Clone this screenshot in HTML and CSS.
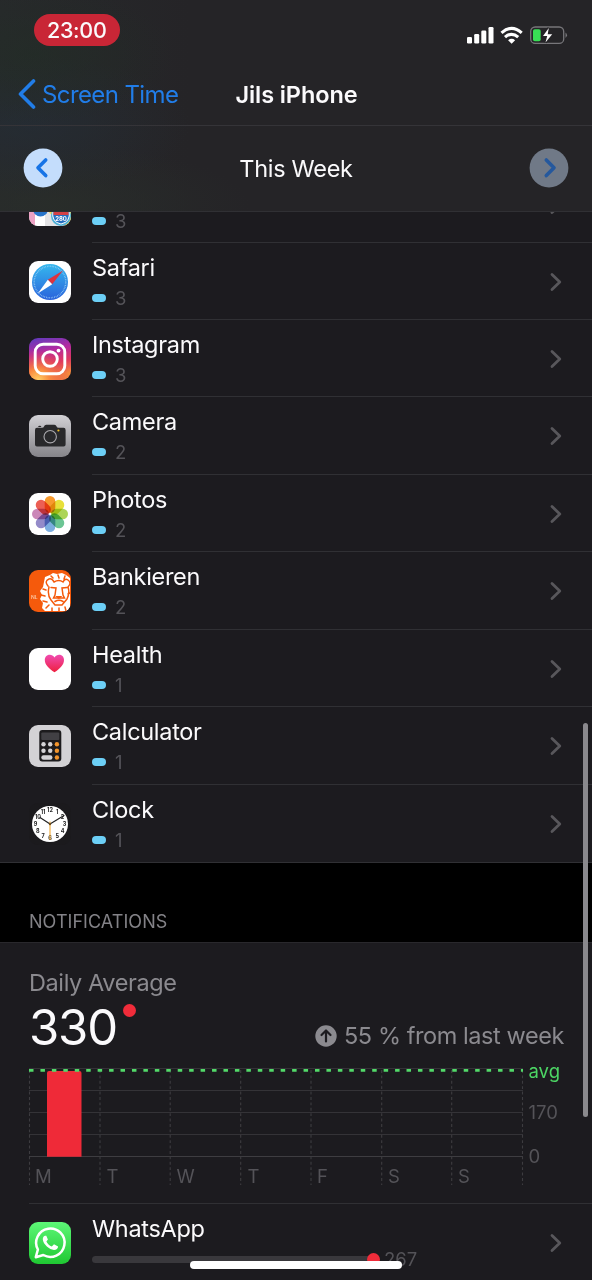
FILE: index.html
```html
<!DOCTYPE html>
<html lang="en">
<head>
<meta charset="utf-8">
<title>Screen Time</title>
<link rel="stylesheet" href="styles.css">
</head>
<body>
<svg class="defs" aria-hidden="true">
  <defs>
    <linearGradient id="safari" x2="0" y2="1"><stop stop-color="#35b8ee"/><stop offset="1" stop-color="#2a62dc"/></linearGradient>
    <linearGradient id="insta" x2="0.25" y2="1"><stop stop-color="#5a3cc0"/><stop offset=".4" stop-color="#b52aa0"/><stop offset=".7" stop-color="#e0385f"/><stop offset="1" stop-color="#f58a3c"/></linearGradient>
    <radialGradient id="instaGlow" cx=".22" cy="1" r=".75"><stop stop-color="#ffd063"/><stop offset=".35" stop-color="#f98c40"/><stop offset="1" stop-color="#e0385f" stop-opacity="0"/></radialGradient>
    <linearGradient id="camera" x2="0" y2="1"><stop stop-color="#d2d1d5"/><stop offset="1" stop-color="#858489"/></linearGradient>
    <linearGradient id="heart" x2="0" y2="1"><stop stop-color="#f04bb0"/><stop offset="1" stop-color="#ee1f3e"/></linearGradient>
    <linearGradient id="wa" x2="0" y2="1"><stop stop-color="#5df777"/><stop offset="1" stop-color="#1fc832"/></linearGradient>
    <clipPath id="tile"><rect width="42" height="42" rx="9"/></clipPath>
    <symbol id="chevron" viewBox="0 0 12 20"><path d="M2 2.500 9.800 10 2 17.500" fill="none" stroke="currentColor" stroke-width="2.800" stroke-linecap="round" stroke-linejoin="round"/></symbol>
  </defs>
</svg>
<div class="phone">
  <header class="header">
    <div class="status">
      <span class="time">23:00</span>
      <svg class="status-icons" width="102" height="20" viewBox="0 0 102 20">
        <g fill="#fff">
          <rect x="1" y="12" width="5" height="6.500" rx="1.300"/><rect x="8.200" y="9" width="5" height="9.500" rx="1.300"/><rect x="15.300" y="5.500" width="5" height="13" rx="1.300"/><rect x="22.500" y="2" width="5" height="16.500" rx="1.300"/>
          <path d="M45.600 18.800 42.100 15.200q3.500-2.900 7 0z"/>
        </g>
        <g fill="none" stroke="#fff" stroke-width="3.100">
          <path d="M35.500 7.800q10.100-9 20.200 0M39 12.200q6.600-5.800 13.200 0"/>
        </g>
        <rect x="64.700" y="2" width="33" height="16.400" rx="4.500" fill="none" stroke="#77767a" stroke-width="1.300"/>
        <path d="M99.500 7.500q3 2.700 0 5.400z" fill="#77767a"/>
        <rect x="67" y="4.300" width="7.700" height="12" rx="1.800" fill="#38df55"/>
        <path d="M82.800 3 77 11h4.200l-1.700 6.500 6.700-8.300h-4.500z" fill="#fff" stroke="#252427" stroke-width="2.600" paint-order="stroke"/>
      </svg>
    </div>
    <div class="nav">
      <span class="back"><svg width="19" height="32" viewBox="0 0 19 32"><path d="M16.500 3 3.500 16l13 13" fill="none" stroke="#217de8" stroke-width="3.600" stroke-linecap="round" stroke-linejoin="round"/></svg><span class="back-label">Screen Time</span></span>
      <span class="nav-title">Jils iPhone</span>
      <span></span>
    </div>
    <div class="week">
      <svg width="40" height="40" viewBox="0 0 40 40"><circle cx="20" cy="20" r="19.400" fill="#c4ddfc"/><path d="M22.700 12 15 19.800l7.700 7.800" fill="none" stroke="#1673e6" stroke-width="3.600" stroke-linecap="round" stroke-linejoin="round"/></svg>
      <span class="week-label">This Week</span>
      <svg width="40" height="40" viewBox="0 0 40 40"><circle cx="20" cy="20" r="19.400" fill="#707987"/><path d="M17.300 12 25 19.800l-7.700 7.800" fill="none" stroke="#25589d" stroke-width="3.600" stroke-linecap="round" stroke-linejoin="round"/></svg>
    </div>
  </header>

  <main>
    <section class="clipped">
      <div class="row">
        <svg class="app" viewBox="0 0 42 42"><g clip-path="url(#tile)"><path fill="#e4e3e5" d="M0 0h42v42H0z"/><path fill="#eca2c4" d="M0 0h6v42H0z"/><path fill="#fff" d="M6 26h10v16H6z"/><path fill="#f5d94f" d="M42 20v22h-5l-8-4-12-13z"/><circle cx="11.500" cy="25" r="7.500" fill="#2874c9"/><circle cx="32" cy="32" r="10" fill="#4eb1d6"/><path d="M24 27h16q2 11-8 13-10-2-8-13z" fill="#246fc0" stroke="#fff" stroke-width="1"/><path fill="#d44045" d="M24.500 27.500h15v3.500h-15z"/></g><text x="32" y="37" class="road">280</text></svg>
        <div class="info"><div class="name"></div><div class="usage"><i class="pill"></i>3</div></div><svg class="chev"><use href="#chevron"/></svg>
      </div>
    </section>

    <section class="list">
      <div class="row">
        <svg class="app" viewBox="0 0 42 42"><rect width="42" height="42" rx="9" fill="#fff"/><circle cx="21" cy="21" r="18" fill="url(#safari)"/><circle cx="21" cy="21" r="15.800" fill="none" stroke="#9fd3f7" stroke-width="1.500" stroke-dasharray=".6 1.050"/><path d="M34 9.500 18.800 18.800l4.400 4.400z" fill="#dc323f"/><path d="m18.800 18.800 4.400 4.400L8.800 32.500z" fill="#fff"/></svg>
        <div class="info"><div class="name">Safari</div><div class="usage"><i class="pill"></i>3</div></div><svg class="chev"><use href="#chevron"/></svg>
      </div>
      <div class="row">
        <svg class="app" viewBox="0 0 42 42"><rect width="42" height="42" rx="9" fill="url(#insta)"/><rect width="42" height="42" rx="9" fill="url(#instaGlow)"/><g fill="none" stroke="#fff" stroke-width="2.900"><rect x="6.200" y="6.200" width="29.600" height="29.600" rx="8"/><circle cx="21" cy="21" r="7.300"/></g><circle cx="29.500" cy="12.600" r="1.900" fill="#fff"/></svg>
        <div class="info"><div class="name">Instagram</div><div class="usage"><i class="pill"></i>3</div></div><svg class="chev"><use href="#chevron"/></svg>
      </div>
      <div class="row tall">
        <svg class="app" viewBox="0 0 42 42"><rect width="42" height="42" rx="9" fill="url(#camera)"/><path d="M6 15q0-2.200 2-2.200h5q1.600 0 2-1.400.5-1.600 2.300-1.600h8q1.800 0 2.300 1.600.4 1.400 2 1.400h5q2 0 2 2.200v14.500q0 2-2 2H8q-2 0-2-2z" fill="#29292b"/><path d="M9 12q.6-1.500 2.200-1.200 1 .2 1.200 1.200z" fill="#29292b"/><circle cx="21.200" cy="21.700" r="6.200" fill="none" stroke="#aaa9ad" stroke-width="1.100"/><circle cx="29.400" cy="15.500" r="1.100" fill="#f4bf21"/></svg>
        <div class="info"><div class="name">Camera</div><div class="usage"><i class="pill"></i>2</div></div><svg class="chev"><use href="#chevron"/></svg>
      </div>
      <div class="row">
        <svg class="app" viewBox="0 0 42 42"><rect width="42" height="42" rx="9" fill="#fff"/><g class="petals"><rect x="15.700" y="3" width="10.600" height="17" rx="5.300" fill="#f79a2e"/><rect x="15.700" y="3" width="10.600" height="17" rx="5.300" fill="#e8e03a" transform="rotate(45 21 21)"/><rect x="15.700" y="3" width="10.600" height="17" rx="5.300" fill="#add558" transform="rotate(90 21 21)"/><rect x="15.700" y="3" width="10.600" height="17" rx="5.300" fill="#6cc594" transform="rotate(135 21 21)"/><rect x="15.700" y="3" width="10.600" height="17" rx="5.300" fill="#7cade0" transform="rotate(180 21 21)"/><rect x="15.700" y="3" width="10.600" height="17" rx="5.300" fill="#948bc9" transform="rotate(225 21 21)"/><rect x="15.700" y="3" width="10.600" height="17" rx="5.300" fill="#cb87b8" transform="rotate(270 21 21)"/><rect x="15.700" y="3" width="10.600" height="17" rx="5.300" fill="#ec5f54" transform="rotate(315 21 21)"/></g><circle cx="21" cy="21" r="1.300" fill="#f4f4f4"/></svg>
        <div class="info"><div class="name">Photos</div><div class="usage"><i class="pill"></i>2</div></div><svg class="chev"><use href="#chevron"/></svg>
      </div>
      <div class="row tall">
        <svg class="app" viewBox="0 0 42 42"><g clip-path="url(#tile)"><path fill="#f55a0c" d="M0 0h42v42H0z"/><path fill="#fff" d="m16 7 5-2 3-2 4 1 5-1 4 2 4 3v33H16l-3-3 1-5-3-4 2-4-2-4 3-4z"/><g fill="none" stroke="#f55a0c" stroke-width="1.500" stroke-linecap="round"><path d="M19 16q-4-5 1-7 3-1 5 3 5-3 9 0 2-4 5-2 4 3 0 7M20 17q-2 8 2 13l4 5h7l5-6q3-6 1-12M22 17.500l5 .5-1 7-1.500 3h11L34 25l-1-7 5-.5M26 31.500q4-2.500 8 0M22 6l2 2M29 5l1 3M36 6l-1 3M14 19l3 1M12 25l4 1M14 31l4 1M17 38l3-3M23 41v-3M30 42v-4M37 41l-1-4M41 23l-2 1"/></g><path d="M26 26h7.500l-3.700 3z" fill="#f55a0c"/></g><text x="2" y="28.500" class="nl">NL</text></svg>
        <div class="info"><div class="name">Bankieren</div><div class="usage"><i class="pill"></i>2</div></div><svg class="chev"><use href="#chevron"/></svg>
      </div>
      <div class="row">
        <svg class="app" viewBox="0 0 42 42"><rect width="42" height="42" rx="9" fill="#fff"/><path d="M25.500 24.300C20 20.700 15.800 16.700 15.800 12c0-5.700 7-7 9.700-2.600C28.200 5 35 6.300 35 12c0 4.700-4 8.700-9.500 12.300z" fill="url(#heart)"/></svg>
        <div class="info"><div class="name">Health</div><div class="usage"><i class="pill"></i>1</div></div><svg class="chev"><use href="#chevron"/></svg>
      </div>
      <div class="row tall">
        <svg class="app" viewBox="0 0 42 42"><rect width="42" height="42" rx="9" fill="#d3d2d5"/><rect x="10.300" y="5" width="22" height="31.500" rx="3" fill="#1c1b1d"/><rect x="12.300" y="7.500" width="18" height="7.500" rx="1" fill="#414044"/><g fill="#d4d3d6"><circle cx="14.500" cy="19.200" r="2.200"/><circle cx="21.200" cy="19.200" r="2.200"/><circle cx="14.500" cy="25.700" r="2.200"/><circle cx="21.200" cy="25.700" r="2.200"/><rect x="12.300" y="30.300" width="11.200" height="4.400" rx="2.200"/></g><g fill="#f3952c"><circle cx="27.900" cy="19.200" r="2.200"/><circle cx="27.900" cy="25.700" r="2.200"/><circle cx="27.900" cy="32.500" r="2.200"/></g></svg>
        <div class="info"><div class="name">Calculator</div><div class="usage"><i class="pill"></i>1</div></div><svg class="chev"><use href="#chevron"/></svg>
      </div>
      <div class="row tall last">
        <svg class="app" viewBox="0 0 42 42"><rect width="42" height="42" rx="9" fill="#1b1a1d"/><circle cx="21" cy="21" r="18" fill="#fff"/><g class="dial"><text x="21" y="8.900">12</text><text x="28.300" y="10.900">1</text><text x="33.500" y="16">2</text><text x="35.500" y="23">3</text><text x="33.500" y="29.700">4</text><text x="28.300" y="35">5</text><text x="21" y="37.200">6</text><text x="14" y="35">7</text><text x="8.700" y="29.700">8</text><text x="6.500" y="23">9</text><text x="9" y="16">10</text><text x="14" y="10.900">11</text></g><path d="M21 21 11 14.500M21 21l14-8.500" stroke="#222" stroke-width="1.200" stroke-linecap="round"/><path d="M21 18.500V37" stroke="#f0aa36" stroke-width="1.100"/><circle cx="21" cy="21" r="1.200" fill="#6b4d20"/></svg>
        <div class="info"><div class="name">Clock</div><div class="usage"><i class="pill"></i>1</div></div><svg class="chev"><use href="#chevron"/></svg>
      </div>
    </section>

    <h2 class="section-title">NOTIFICATIONS</h2>

    <section class="summary">
      <div class="daily">Daily Average</div>
      <div class="figures">
        <span class="total">330<i class="badge"></i></span>
        <span class="change"><svg width="22" height="22" viewBox="0 0 22 22"><circle cx="11" cy="11" r="10.700" fill="#8b8a8f"/><path d="M11 16.500V6M6.500 10 11 5.500l4.500 4.500" fill="none" stroke="#1c1b1f" stroke-width="2.200" stroke-linecap="round" stroke-linejoin="round"/></svg><span class="change-text">55 % from last week</span></span>
      </div>
      <svg class="chart" width="563" height="126" viewBox="0 0 563 126">
        <g stroke="#343337" stroke-width="1"><path d="M0 5.500h494M0 27.500h494M0 49.500h494M0 71.500h494"/><path stroke="#3e3d41" d="M0 93.500h494"/></g>
        <path d="M.5 7v115M71 7v115M141.200 7v115M211.700 7v115M282 7v115M352.700 7v115M422.700 7v115M493.500 7v115" stroke="#3d3c40" stroke-width="1.100" stroke-dasharray="2.900 2.500"/>
        <path d="M18 93.800V10q0-2 2-2h30.500q2 0 2 2v83.800z" fill="#ef2a38"/>
        <path d="M0 7.400h494" stroke="#52d969" stroke-width="2.600" stroke-dasharray="4.500 6.940"/>
        <g class="days"><text x="6" y="120">M</text><text x="77.500" y="120">T</text><text x="147.500" y="120">W</text><text x="218.500" y="120">T</text><text x="288" y="120">F</text><text x="359" y="120">S</text><text x="429" y="120">S</text></g>
        <g class="scale"><text x="499.500" y="14.500" class="avg">avg</text><text x="499.500" y="56">170</text><text x="499.500" y="100">0</text></g>
      </svg>
    </section>

    <section class="notify">
      <div class="row">
        <svg class="app" viewBox="0 0 42 42"><rect width="42" height="42" rx="9" fill="url(#wa)"/><path d="m6.800 35.200 2.100-7.700A14.200 14.200 0 1 1 14.300 33z" fill="none" stroke="#fff" stroke-width="2.500" stroke-linejoin="round"/><path d="M16.200 13.700c-1-.1-2.600 1.400-2.400 3.900.4 4.800 6.700 10.300 11.200 10.400 2.300 0 4.200-1.500 4.100-3.400l-4.100-2.300-2.200 2.200c-2.400-.9-4.500-3-5.400-5.100l1.500-2-1.600-3.600z" fill="#fff"/></svg>
        <div class="info"><div class="name">WhatsApp</div><div class="usage"><i class="track"><i class="dot"></i></i>267</div></div><svg class="chev"><use href="#chevron"/></svg>
      </div>
    </section>
  </main>
  <div class="scrollbar"></div>
  <div class="home"></div>
</div>
</body>
</html>
```
FILE: styles.css
```css
* { box-sizing: border-box; }
body { margin: 0; background: #1c1b1f; font-family: Inter, "Liberation Sans", sans-serif; color: #fbfafc; }
.defs { position: absolute; width: 0; height: 0; }
.phone { position: relative; width: 592px; height: 1280px; overflow: hidden; background: #1c1b1f; }
svg { display: block; flex: none; }

.header {
  height: 212px;
  border-bottom: 1px solid #303034;
  background:
    radial-gradient(ellipse 140px 70px at 35px 55px, rgba(34, 46, 38, .6), transparent),
    radial-gradient(ellipse 160px 70px at 30px 125px, rgba(36, 46, 56, .6), transparent),
    radial-gradient(ellipse 200px 60px at 50px 205px, rgba(41, 46, 42, .8), transparent),
    linear-gradient(90deg, #27292b 0, #252427 190px);
}
.status { height: 64px; padding: 14px 20px 0 33.5px; display: flex; justify-content: space-between; }
.time { width: 86.5px; height: 32px; border-radius: 16px; background: #c92636; font-size: 21.5px; font-weight: 550; line-height: 33px; letter-spacing: -.3px; text-align: center; }
.status-icons { margin: 11px 4px 0 0; }
.nav { height: 62px; border-bottom: 1px solid #353438; padding: 0 0 1px 17px; display: grid; grid-template-columns: 210px 1fr 227px; align-items: center; }
.back { display: flex; align-items: center; gap: 6px; color: #217de8; font-size: 24px; letter-spacing: -.6px; }
.nav-title { font-size: 23.5px; font-weight: 600; text-align: center; white-space: nowrap; letter-spacing: -.1px; padding-left: 1px; }
.week { height: 85px; padding: 0 23px 1px; display: flex; align-items: center; justify-content: space-between; font-size: 23.5px; }
.week-label { letter-spacing: -.3px; }

.clipped { height: 31px; overflow: hidden; display: flex; flex-direction: column; justify-content: flex-end; }
.row { height: 77px; flex: none; display: flex; align-items: flex-start; padding-left: 28.5px; position: relative; }
.tall { height: 78px; }
.app { width: 42px; height: 42px; margin-top: 17.5px; }
.info { flex: 1; align-self: stretch; margin-left: 21.5px; border-bottom: 1px solid #303034; padding-top: 11px; }
.name { height: 28px; font-size: 23.5px; line-height: 28px; letter-spacing: -.3px; }
.usage { display: flex; align-items: center; height: 24px; margin-top: 4px; font-size: 18.5px; color: #545358; }
.pill { width: 14px; height: 7.5px; border-radius: 4px; background: #6ccff6; margin-right: 9px; }
.chev { position: absolute; left: 550px; top: 29px; width: 12px; height: 20px; color: #58575b; }
.last .info { border-color: transparent; }
.last { border-bottom: 1px solid #303034; }

.section-title { margin: 0; height: 80px; padding: 48px 29px 0; border-bottom: 1px solid #29282c; background: #000; color: #838287; font-size: 18px; line-height: 22px; letter-spacing: .05px; font-weight: 400; }
.summary { height: 260px; padding: 25px 0 0 29px; }
.daily { font-size: 23.5px; line-height: 30px; letter-spacing: -.4px; color: #8b8a8f; }
.figures { display: flex; justify-content: space-between; height: 65px; padding-right: 28px; }
.total { font-size: 49px; line-height: 60px; letter-spacing: -1.2px; display: flex; gap: 6.500px; }
.badge { width: 13px; height: 13px; border-radius: 50%; background: #f02c3a; margin-top: 6px; }
.change { display: flex; align-items: center; gap: 7px; height: 30px; margin-top: 22.5px; font-size: 23.5px; letter-spacing: -.42px; color: #8b8a8f; }
.chart { overflow: visible; }
.days, .scale { font-size: 18.5px; fill: #545358; }
.scale .avg { fill: #4cd564; }

.notify { margin-left: 29px; border-top: 1px solid #303034; }
.notify .row { padding-left: 0; }
.notify .info { margin-left: 21px; }
.notify .chev { left: 521px; }
.track { width: 283px; height: 7px; margin-right: 9px; border-radius: 4px; background: #39383c; display: flex; align-items: center; justify-content: flex-end; }
.dot { width: 13px; height: 13px; border-radius: 50%; background: #f02c3a; margin-right: -5px; flex: none; }

.scrollbar { position: absolute; left: 583px; top: 723px; width: 5px; height: 394px; border-radius: 3px; background: #8a898d; }
.home { position: absolute; left: 190px; top: 1261px; width: 212px; height: 8px; border-radius: 4px; background: #fff; }

.road { font-size: 6px; font-weight: 700; fill: #fff; text-anchor: middle; }
.nl { font-size: 5px; font-weight: 600; fill: #fbc6a0; }
.dial { font-size: 5.500px; font-weight: 700; fill: #222; text-anchor: middle; }
.petals rect { mix-blend-mode: multiply; }
```
